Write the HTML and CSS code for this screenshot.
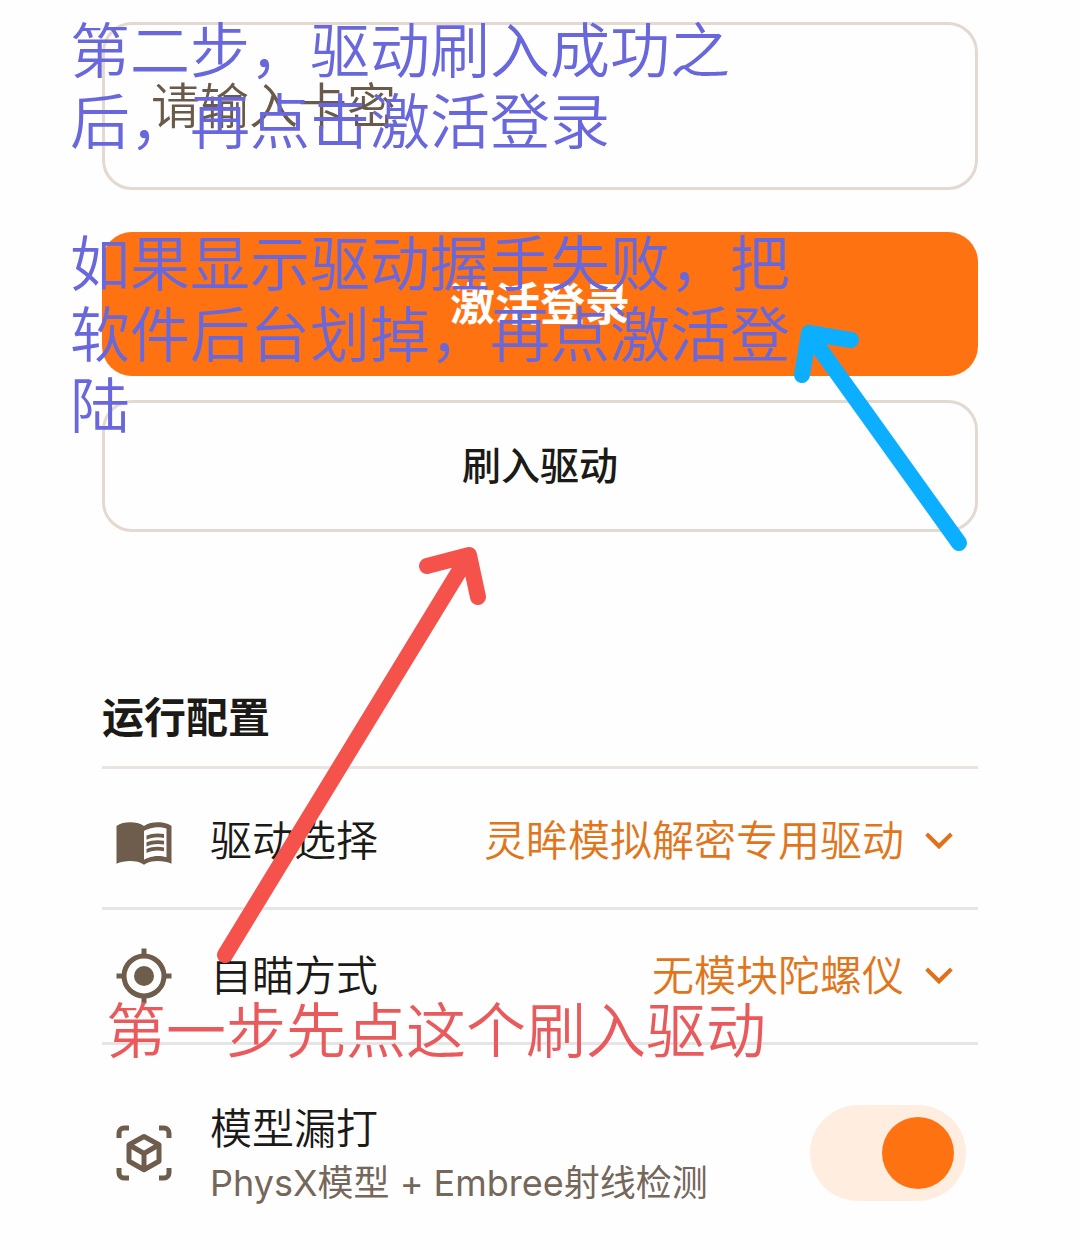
FILE: index.html
```html
<!DOCTYPE html>
<html lang="zh-CN">
<head>
    <meta charset="UTF-8">
    <meta name="viewport" content="width=device-width, initial-scale=1.0">
    <title>运行配置</title>
    <link rel="stylesheet" href="styles.css">
</head>
<body>

    <main class="page">
        <form class="login">
            <input type="text" class="key-input" placeholder="请输入卡密" aria-label="请输入卡密">
            <button type="button" class="btn btn-primary">激活登录</button>
            <button type="button" class="btn btn-outline">刷入驱动</button>
        </form>

        <section class="config">
            <h2>运行配置</h2>

            <div class="row">
                <svg class="icon" viewBox="0 0 24 24" aria-hidden="true">
                    <path fill-rule="evenodd" d="M21 5c-1.1-.35-2.3-.5-3.5-.5-1.95 0-4.05.4-5.5 1.5-1.45-1.1-3.55-1.5-5.5-1.5S2.45 4.9 1 6v15.1C2.5 20.3 4.5 20 6.5 20c1.95 0 4.05.4 5.5 1.5 1.45-1.1 3.55-1.5 5.5-1.5 2 0 4 .3 5.5 1.1V6c-.6-.45-1.25-.75-2-1zM21 18.5c-1.1-.35-2.3-.5-3.5-.5-1.7 0-4.15.65-5.5 1.5V8c1.35-.85 3.8-1.5 5.5-1.5 1.2 0 2.4.15 3.5.5v11.5z"/>
                    <path d="M17.5 10.5c.88 0 1.73.09 2.5.26V9.24c-.79-.15-1.64-.24-2.5-.24-1.7 0-3.24.29-4.5.83v1.66c1.13-.64 2.7-.99 4.5-.99zM13 12.49v1.66c1.13-.64 2.7-.99 4.5-.99.88 0 1.73.09 2.5.26V11.9c-.79-.15-1.64-.24-2.5-.24-1.7 0-3.24.3-4.5.83zM17.5 14.33c-1.7 0-3.24.29-4.5.83v1.66c1.13-.64 2.7-.99 4.5-.99.88 0 1.73.09 2.5.26v-1.52c-.79-.16-1.64-.24-2.5-.24z"/>
                </svg>
                <label for="driver">驱动选择</label>
                <select id="driver">
                    <option>灵眸模拟解密专用驱动</option>
                </select>
                <svg class="arrow" viewBox="0 0 24 24" aria-hidden="true">
                    <path d="M7.1 8.2L12 13l4.9-4.8L18.1 9.5 12 15.7 5.900 9.5z"/>
                </svg>
            </div>

            <div class="row">
                <svg class="icon" viewBox="0 0 24 24" aria-hidden="true">
                    <circle cx="12" cy="12" r="4"/>
                    <g class="line">
                        <circle cx="12" cy="12" r="8"/>
                        <path d="M12 1v3M12 20v3M1 12h3M20 12h3"/>
                    </g>
                </svg>
                <label for="aim">自瞄方式</label>
                <select id="aim">
                    <option>无模块陀螺仪</option>
                </select>
                <svg class="arrow" viewBox="0 0 24 24" aria-hidden="true">
                    <path d="M7.1 8.2L12 13l4.9-4.8L18.1 9.5 12 15.7 5.900 9.5z"/>
                </svg>
            </div>

            <div class="row row-tall">
                <svg class="icon" viewBox="0 0 24 24" aria-hidden="true">
                    <g class="line">
                        <path d="M2 6V4a2 2 0 0 1 2-2h2M18 2h2a2 2 0 0 1 2 2v2M22 18v2a2 2 0 0 1-2 2h-2M6 22H4a2 2 0 0 1-2-2v-2"/>
                        <path d="M12 5.4l6 3.3v6.6l-6 3.4-6-3.4V8.7zM6 8.7l6 3.5 6-3.5M12 12.2v6.5"/>
                    </g>
                </svg>
                <label for="model">
                    模型漏打
                    <small>PhysX模型 + Embree射线检测</small>
                </label>
                <input type="checkbox" class="switch" id="model" checked>
            </div>
        </section>

        <!-- 步骤说明和箭头 -->
        <p class="note note-blue">第二步，驱动刷入成功之<br>后，再点击激活登录<br><br>如果显示驱动握手失败，把<br>软件后台划掉，再点激活登<br>陆</p>
        <p class="note note-red">第一步先点这个刷入驱动</p>
        <svg class="pointers" width="1080" height="1250" aria-hidden="true">
            <path class="pointer-blue" d="M959 543L812 338M802 375L809 333L851 340"/>
            <path class="pointer-blue" d="M809 333l8 12"/>
            <path class="pointer-red" d="M225 955L466 560M427 566L469 555L478 597"/>
        </svg>
    </main>

</body>
</html>
```
FILE: styles.css
```css
* {
    box-sizing: border-box;
}
body {
    margin: 0;
    background-color: #fffefe;
    color: #1b1a17;
    font-family: Inter, "Noto Sans CJK SC", sans-serif;
    font-size: 42px;
}
input, button, select {
    font-family: inherit;
}
.page {
    position: relative;
    padding: 22px 102px 0;
    overflow: hidden;
}
.login {
    display: flex;
    flex-direction: column;
}
.key-input {
    height: 168px;
    padding: 0 46px;
    border: 3px solid #e3d9d0;
    border-radius: 30px;
    background: none;
    font-size: 49px;
    font-weight: 350;
}
.key-input::placeholder {
    color: #6a5a4a;
    opacity: 1;
}
.btn {
    padding: 0 0 6px;
    border-radius: 30px;
}
.btn-primary {
    height: 144px;
    margin-top: 42px;
    border: none;
    background-color: #ff7212;
    color: #fff;
    font-size: 45px;
    font-weight: 700;
}
.btn-outline {
    height: 132px;
    margin-top: 24px;
    border: 3px solid #e3d9d0;
    background: none;
    color: #1b1a17;
    font-size: 39px;
    font-weight: 500;
}
.config {
    margin-top: 156px;
}
.config h2 {
    margin: 0 0 6px;
    padding-bottom: 18px;
    border-bottom: 3px solid #e9e5de;
    font-size: 42px;
    line-height: 60px;
}
.row {
    display: flex;
    align-items: center;
    height: 135px;
    padding: 0 12px;
    border-bottom: 3px solid #e5e5e5;
}
.row-tall {
    height: 216px;
    border-bottom: none;
}
.row label {
    margin-left: 36px;
    font-weight: 350;
    line-height: 56px;
}
.row-tall label {
    padding-top: 4px;
}
.row small {
    display: block;
    color: #75675a;
    font-size: 36px;
    font-weight: 400;
    line-height: 52px;
}
.row select {
    flex: 1;
    min-width: 0;
    padding: 0 0 2px;
    margin-right: 8px;
    appearance: none;
    border: none;
    background: none;
    color: #e0761c;
    font-size: 42px;
    font-weight: 350;
    text-align-last: right;
}
.icon {
    flex: none;
    width: 60px;
    height: 60px;
    fill: #6e5c4c;
}
.line {
    fill: none;
    stroke: #6e5c4c;
    stroke-width: 2;
    stroke-linejoin: round;
}
.arrow {
    flex: none;
    width: 54px;
    height: 54px;
    fill: #e0701c;
}
.switch {
    appearance: none;
    width: 156px;
    height: 96px;
    margin: 0 0 0 auto;
    padding: 12px;
    border-radius: 48px;
    background-color: #ffeedf;
}
.switch::before {
    content: "";
    display: block;
    width: 72px;
    height: 72px;
    border-radius: 50%;
    background-color: #ff7212;
}
.switch:checked::before {
    margin-left: auto;
}
.note {
    position: absolute;
    margin: 0;
    font-size: 60px;
    font-weight: 350;
    line-height: 71px;
    white-space: nowrap;
}
.note-blue {
    left: 70px;
    top: 16px;
    color: #6868dc;
}
.note-red {
    left: 106px;
    top: 996px;
    color: #e85a5c;
}
.pointers {
    position: absolute;
    left: 0;
    top: 0;
    fill: none;
    stroke-width: 16;
    stroke-linecap: round;
    stroke-linejoin: round;
    pointer-events: none;
}
.pointer-blue {
    stroke: #0cafff;
}
.pointer-red {
    stroke: #f5524b;
}
```
